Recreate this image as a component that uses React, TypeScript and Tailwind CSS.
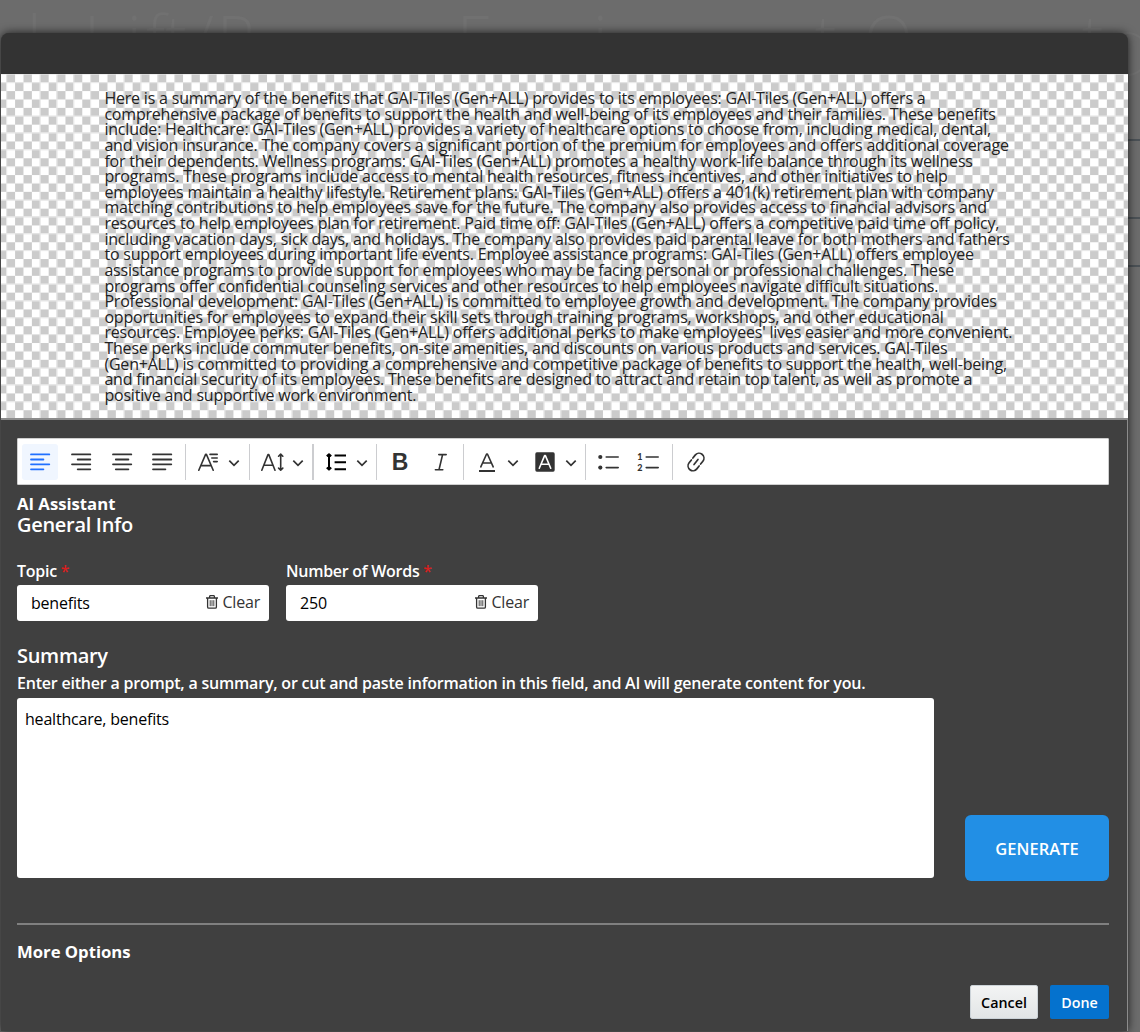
import type { ReactNode } from "react";
import clsx from "clsx";

const summaryLines = [
  "Here is a summary of the benefits that GAI-Tiles (Gen+ALL) provides to its employees: GAI-Tiles (Gen+ALL) offers a",
  "comprehensive package of benefits to support the health and well-being of its employees and their families. These benefits",
  "include: Healthcare: GAI-Tiles (Gen+ALL) provides a variety of healthcare options to choose from, including medical, dental,",
  "and vision insurance. The company covers a significant portion of the premium for employees and offers additional coverage",
  "for their dependents. Wellness programs: GAI-Tiles (Gen+ALL) promotes a healthy work-life balance through its wellness",
  "programs. These programs include access to mental health resources, fitness incentives, and other initiatives to help",
  "employees maintain a healthy lifestyle. Retirement plans: GAI-Tiles (Gen+ALL) offers a 401(k) retirement plan with company",
  "matching contributions to help employees save for the future. The company also provides access to financial advisors and",
  "resources to help employees plan for retirement. Paid time off: GAI-Tiles (Gen+ALL) offers a competitive paid time off policy,",
  "including vacation days, sick days, and holidays. The company also provides paid parental leave for both mothers and fathers",
  "to support employees during important life events. Employee assistance programs: GAI-Tiles (Gen+ALL) offers employee",
  "assistance programs to provide support for employees who may be facing personal or professional challenges. These",
  "programs offer confidential counseling services and other resources to help employees navigate difficult situations.",
  "Professional development: GAI-Tiles (Gen+ALL) is committed to employee growth and development. The company provides",
  "opportunities for employees to expand their skill sets through training programs, workshops, and other educational",
  "resources. Employee perks: GAI-Tiles (Gen+ALL) offers additional perks to make employees' lives easier and more convenient.",
  "These perks include commuter benefits, on-site amenities, and discounts on various products and services. GAI-Tiles",
  "(Gen+ALL) is committed to providing a comprehensive and competitive package of benefits to support the health, well-being,",
  "and financial security of its employees. These benefits are designed to attract and retain top talent, as well as promote a",
  "positive and supportive work environment.",
];

function Icon({ children, className }: { children: ReactNode; className?: string }) {
  return (
    <svg
      viewBox="0 0 24 24"
      fill="none"
      stroke="currentColor"
      strokeWidth="1.6"
      strokeLinecap="round"
      strokeLinejoin="round"
      className={clsx("size-6 shrink-0", className)}
    >
      {children}
    </svg>
  );
}

function Chevron({ className }: { className?: string }) {
  return (
    <svg viewBox="0 0 12 12" fill="none" stroke="currentColor" strokeWidth="1.7" className={clsx("size-3 shrink-0", className)}>
      <path d="M1.3 4.6 6 9.3l4.7-4.7" />
    </svg>
  );
}

function Separator({ wide }: { wide?: boolean }) {
  return <div className={clsx("h-9 shrink-0 bg-[#cccdd0]", wide ? "w-0.5" : "w-px")} />;
}

function Toolbar() {
  return (
    <div className="flex h-[47px] items-center rounded-[1px] border border-[#cfcfcf] bg-white text-[#333]">
      {/* Alignment */}
      <div className="flex w-[167px] items-center pl-1">
        <button className="flex size-9 items-center justify-center rounded-[3px] bg-[#f0f6ff] text-[#2070ff]">
          <Icon><path d="M3 4.4h18.3M3 9.5h12.4M3 14.3h18.3M3 19.3h12.4" strokeWidth="1.8" /></Icon>
        </button>
        <button className="ml-[5px] flex size-9 items-center justify-center">
          <Icon><path d="M3 4.4h18.3M8.7 9.5h12.6M3 14.3h18.3M8.7 19.3h12.6" strokeWidth="1.8" /></Icon>
        </button>
        <button className="ml-[5px] flex size-9 items-center justify-center">
          <Icon><path d="M3 4.4h18.3M5.8 9.5h12.6M3 14.3h18.3M5.8 19.3h12.6" strokeWidth="1.8" /></Icon>
        </button>
        <button className="ml-1 flex size-9 items-center justify-center">
          <Icon><path d="M3 4.4h18.3M3 9.5h18.3M3 14.3h18.3M3 19.3h12.4" strokeWidth="1.8" /></Icon>
        </button>
      </div>
      <Separator />

      {/* Font family, size and line height */}
      <div className="flex w-[63px] items-center pl-[9px]">
        <Icon>
          <path d="M3.8 20.2 10.6 4.4h.8l6.8 15.8M6 15.6h10M15 4.4h7.2M16.8 8h5.4M18.6 11.6h3.6" />
        </Icon>
        <Chevron className="ml-[9px]" />
      </div>
      <Separator />
      <div className="flex w-[62px] items-center pl-[11px]">
        <Icon>
          <path d="M.8 20.2 7 4.6h.8L14 20.2M3 15.2h8.8M19.7 4.3v15.6M17.6 6.2l2.1-2.1 2.1 2.1M17.6 18.1l2.1 2.1 2.1-2.1" />
        </Icon>
        <Chevron className="ml-[7px]" />
      </div>
      <Separator wide />
      <div className="flex w-[62px] items-center pl-2.5">
        <Icon className="text-black">
          <path d="M10.6 5.5H22M10.6 12.2H22M10.6 19.2H22M5 4.5v14.8M2.8 6.3 5 4.2l2.2 2.1M2.8 17.5 5 19.6l2.2-2.1" strokeWidth="2" strokeLinecap="butt" />
        </Icon>
        <Chevron className="ml-2" />
      </div>
      <Separator />

      {/* Bold, italic */}
      <div className="flex w-[86px] items-center pl-[11px]">
        <span className="w-6 text-center font-['Liberation_Sans'] text-[23px] leading-6 font-bold">B</span>
        <Icon className="ml-4">
          <path d="M10.8 4.6h7.4M7.4 19.8h7.4M14.6 4.6 11 19.8" />
        </Icon>
      </div>
      <Separator />

      {/* Colors */}
      <div className="flex w-[121px] items-center pl-[11px]">
        <Icon>
          <path d="M5.8 16.8 11.6 4h.8l5.8 12.8M8 13h8" />
          <path d="M4 21h16" strokeWidth="2" strokeLinecap="butt" />
        </Icon>
        <Chevron className="ml-2" />
        <Icon className="ml-3.5">
          <rect x="2.3" y="2.3" width="19.4" height="19.4" rx="1.6" fill="currentColor" stroke="none" />
          <path d="M6.3 18.2 11.6 5.6h.8l5.3 12.6M8.2 14.2h7.6" stroke="#fff" />
        </Icon>
        <Chevron className="ml-2" />
      </div>
      <Separator />

      {/* Lists */}
      <div className="flex w-[86px] items-center pl-2.5">
        <Icon>
          <circle cx="4.3" cy="7" r="2.1" fill="currentColor" stroke="none" />
          <circle cx="4.3" cy="17.6" r="2.1" fill="currentColor" stroke="none" />
          <path d="M10.2 7h12M10.2 17.6h12" />
        </Icon>
        <Icon className="ml-4">
          <text x="1.2" y="9.6" fill="currentColor" stroke="none" className="font-['Lato'] text-[9px] font-black">1</text>
          <text x="1.2" y="21.4" fill="currentColor" stroke="none" className="font-['Lato'] text-[9px] font-black">2</text>
          <path d="M10.2 7h12M10.2 17.6h12" />
        </Icon>
      </div>
      <Separator />
      <Icon className="ml-[11px]">
        <g transform="rotate(-52 12 12)" strokeWidth="1.7">
          <path d="M10.8 7.1H7.1a4.9 4.9 0 0 0 0 9.8h3.7M13.2 7.1h3.7a4.9 4.9 0 0 1 0 9.8h-3.7M8.8 12h6.4" />
        </g>
      </Icon>
    </div>
  );
}

function TrashIcon() {
  return (
    <svg viewBox="0 0 12 14" fill="none" stroke="currentColor" strokeWidth="1.3" className="h-3.5 w-3">
      <path d="M0 3h12M3.6 2.8V1.6q0-1 1-1h2.8q1 0 1 1v1.2M1.6 3v9q0 1.2 1.2 1.2h6.4q1.2 0 1.2-1.2V3" />
      <path d="M4.2 5.2v6M6 5.2v6M7.8 5.2v6" strokeWidth=".9" />
    </svg>
  );
}

function Field({ label, value }: { label: string; value: string }) {
  return (
    <div className="w-[252px]">
      <div className="h-[26px] text-base leading-6 font-semibold tracking-[-0.27px] whitespace-nowrap">
        {label} <span className="text-[#d81f1f]">*</span>
      </div>
      <div className="flex h-9 items-center rounded-[3px] bg-white pr-[9px] pl-3.5 text-base tracking-[-0.2px] text-black">
        <span className="flex-1">{value}</span>
        <button className="flex items-center gap-1 pb-0.5 text-[#333]">
          <TrashIcon />
          Clear
        </button>
      </div>
    </div>
  );
}

export default function App() {
  return (
    <div className="relative h-[1032px] w-[1140px] overflow-hidden bg-[#6c6c6c] font-['Open_Sans',sans-serif] text-white">
      {/* Dimmed page title and rules behind the dialog */}
      <div className="absolute top-[3px] left-0 text-[64px] leading-[70px] font-light text-[#717171]">
        <span className="absolute left-[27px]">l</span>
        <span className="absolute left-[84px]">L</span>
        <span className="absolute left-[127px]">i</span>
        <span className="absolute left-[146px]">ft</span>
        <span className="absolute left-[192px]">/</span>
        <span className="absolute left-[217px]">P</span>
        <span className="absolute left-[457px]">E</span>
        <span className="absolute left-[593px]">i</span>
        <span className="absolute left-[815px]">t</span>
        <span className="absolute left-[864px]">O</span>
        <span className="absolute left-[1082px]">t</span>
      </div>
      <div className="absolute top-8 left-[1105px] size-11 rounded-full border-2 border-[#717171]" />
      <div className="absolute top-[139px] right-0 h-0.5 w-3 bg-[#4b5156]" />
      <div className="absolute top-[217px] right-0 h-0.5 w-3 bg-[#4b5156]" />
      <div className="absolute top-[265px] right-0 h-0.5 w-3 bg-[#4b5156]" />

      <div className="relative mt-[33px] ml-px flex h-[998px] w-[1127px] flex-col rounded-t-lg bg-[#404040] shadow-[0_0_10px_rgba(0,0,0,0.75)]">
        <div className="h-[41px] shrink-0 rounded-t-lg bg-[#333]" />

        {/* Preview on the transparency grid */}
        <div className="h-[344px] shrink-0 bg-[linear-gradient(90deg,#e6e6e6_0.8px,transparent_0.8px),linear-gradient(#e6e6e6_0.8px,transparent_0.8px),conic-gradient(#cbcbcb_25%,#fff_0_50%,#cbcbcb_0_75%,#fff_0)] bg-[length:16.8px_16.8px] bg-[position:5.2px_8.2px] pt-[17px] pl-[103.4px] text-base leading-[15.62px] tracking-[-0.2px] text-[#222]">
          {summaryLines.map((line) => (
            <div key={line} className="whitespace-nowrap">{line}</div>
          ))}
        </div>

        <div className="flex-1 border-t-2 border-r border-[#8c8c8c] px-4 pt-[18px]">
          <div className="w-[1092px]">
            <Toolbar />
            <div className="mt-[9px] text-[16.7px] leading-5 font-bold">AI Assistant</div>
            <h2 className="text-xl leading-[22px] font-semibold tracking-[-0.3px]">General Info</h2>

            <div className="mt-[23px] flex gap-[17px]">
              <Field label="Topic" value="benefits" />
              <Field label="Number of Words" value="250" />
            </div>

            <h2 className="mt-[21px] text-xl leading-7 font-semibold tracking-[-0.3px]">Summary</h2>
            <p className="h-7 text-base leading-[26px] font-semibold tracking-[-0.21px] whitespace-nowrap">
              Enter either a prompt, a summary, or cut and paste information in this field, and AI will generate content for you.
            </p>
            <div className="flex items-end justify-between">
              <div className="h-[180px] w-[917px] rounded-[3px] bg-white px-2 py-[9px] text-base leading-6 tracking-[-0.2px] text-black">
                healthcare, benefits
              </div>
              <button className="relative -mb-[3px] h-[66px] w-36 rounded-md bg-[#228fe5] pt-0.5 text-[16.5px] font-semibold">GENERATE</button>
            </div>

            <div className="mt-[45px] h-0.5 bg-[#808080]" />
            <div className="mt-[15px] text-[16.7px] leading-6 font-bold">More Options</div>

            <div className="mt-[21px] flex justify-end gap-3 text-[14.3px] font-semibold">
              <button className="h-[34px] w-[68px] rounded-xs border border-[#ccd3d8] bg-linear-to-b from-[#f3f4f4] to-[#e2e5e6] pt-px text-black">
                Cancel
              </button>
              <button className="h-[34px] w-[59px] rounded-xs bg-[#0572ce] pt-px">Done</button>
            </div>
          </div>
        </div>
      </div>
    </div>
  );
}
